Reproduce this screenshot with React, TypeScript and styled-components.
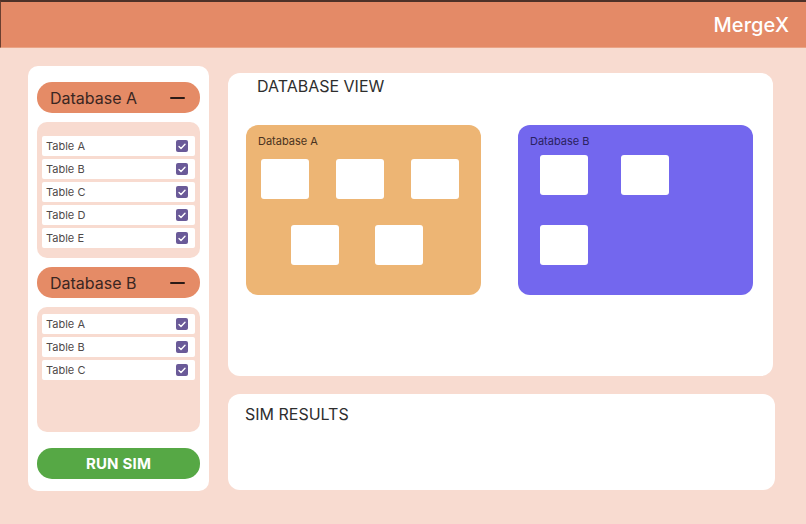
import React from 'react';
import styled, { createGlobalStyle } from 'styled-components';

const GlobalStyle = createGlobalStyle`
  html, body {
    margin: 0;
    padding: 0;
    background: #f8dbd0;
    font-family: Inter, "Noto Sans", sans-serif;
  }
`;

const Page = styled.div`
  width: 806px;
  height: 524px;
  display: flex;
  flex-direction: column;
  background: #f8dbd0;
  overflow: hidden;
`;

const Header = styled.header`
  height: 45px;
  box-sizing: content-box;
  border-top: 2px solid #4d3128;
  border-left: 1px solid #6b3f30;
  border-bottom: 1px solid #eaa486;
  background: #e48a67;
  display: flex;
  align-items: center;
  justify-content: flex-end;
  padding-right: 17px;
`;

const Brand = styled.h1`
  margin: 0;
  font-size: 20px;
  font-weight: 500;
  color: #ffffff;
  letter-spacing: 0.1px;
`;

const Main = styled.main`
  display: flex;
  gap: 19px;
  padding: 18px 0 0 28px;
`;

const Sidebar = styled.aside`
  width: 181px;
  height: 425px;
  box-sizing: border-box;
  background: #ffffff;
  border-radius: 10px;
  padding: 16px 9px 12px;
  display: flex;
  flex-direction: column;
`;

const DbHeader = styled.div<{ $mt?: number }>`
  height: 31px;
  margin-top: ${(p) => p.$mt ?? 0}px;
  border-radius: 15px;
  background: #e58b66;
  display: flex;
  align-items: center;
  justify-content: space-between;
  padding: 0 15px 0 13px;
  font-size: 16px;
  color: #3a2622;
`;

const Minus = styled.span`
  width: 15px;
  height: 2px;
  background: #2a1a16;
  border-radius: 1px;
`;

const TableList = styled.div<{ $h: number; $pt: number }>`
  height: ${(p) => p.$h}px;
  box-sizing: border-box;
  margin-top: 9px;
  background: #f8dbd0;
  border-radius: 10px;
  padding: ${(p) => p.$pt}px 5px 0;
  display: flex;
  flex-direction: column;
  gap: 3px;
`;

const Row = styled.label`
  height: 20px;
  background: #ffffff;
  border-radius: 2px;
  display: flex;
  align-items: center;
  justify-content: space-between;
  padding: 0 7px 0 4px;
  font-size: 11px;
  color: #4f4a4a;
`;

const Check = styled.span`
  width: 12px;
  height: 12px;
  border-radius: 2px;
  background: #6a5a98;
  display: flex;
  align-items: center;
  justify-content: center;
`;

const RunButton = styled.button`
  margin-top: auto;
  height: 31px;
  border: none;
  border-radius: 15px;
  background: #56a845;
  color: #ffffff;
  font-family: inherit;
  font-size: 15px;
  font-weight: 700;
  letter-spacing: 0.2px;
`;

const Content = styled.section`
  width: 547px;
  padding-top: 7px;
  display: flex;
  flex-direction: column;
  gap: 18px;
`;

const Panel = styled.div<{ $h: number; $w: number; $px: number; $pt: number }>`
  width: ${(p) => p.$w}px;
  height: ${(p) => p.$h}px;
  box-sizing: border-box;
  background: #ffffff;
  border-radius: 12px;
  padding: ${(p) => p.$pt}px ${(p) => p.$px}px 0;
`;

const PanelTitle = styled.h2<{ $ml?: number }>`
  margin: 0 0 0 ${(p) => p.$ml ?? 0}px;
  font-size: 16px;
  font-weight: 400;
  line-height: 20px;
  color: #2e2e2e;
`;

const Boxes = styled.div`
  display: flex;
  gap: 37px;
  margin-top: 29px;
`;

const DbBox = styled.div<{ $bg: string }>`
  width: 235px;
  height: 170px;
  box-sizing: border-box;
  border-radius: 12px;
  background: ${(p) => p.$bg};
  padding: 10px 12px 0;
`;

const BoxLabel = styled.div<{ $color: string }>`
  font-size: 11px;
  line-height: 13px;
  color: ${(p) => p.$color};
`;

const BlockRow = styled.div<{ $gap: number; $pl: number; $mt: number }>`
  display: flex;
  gap: ${(p) => p.$gap}px;
  padding-left: ${(p) => p.$pl}px;
  margin-top: ${(p) => p.$mt}px;
`;

const Block = styled.div`
  width: 48px;
  height: 40px;
  background: #ffffff;
  border-radius: 3px;
`;

const CheckIcon = () => (
  <svg width="8" height="7" viewBox="0 0 8 7">
    <path d="M1 3.6 L3 5.4 L7 1.2" fill="none" stroke="#ffffff" strokeWidth="1.4" strokeLinecap="round" strokeLinejoin="round" />
  </svg>
);

const TableRow = ({ name }: { name: string }) => (
  <Row>
    {name}
    <Check>
      <CheckIcon />
    </Check>
  </Row>
);

export default function App() {
  return (
    <>
      <GlobalStyle />
      <Page>
        <Header>
          <Brand>MergeX</Brand>
        </Header>
        <Main>
          <Sidebar>
            <DbHeader>
              Database A
              <Minus />
            </DbHeader>
            <TableList $h={136} $pt={14}>
              {['Table A', 'Table B', 'Table C', 'Table D', 'Table E'].map((t) => (
                <TableRow key={t} name={t} />
              ))}
            </TableList>
            <DbHeader $mt={9}>
              Database B
              <Minus />
            </DbHeader>
            <TableList $h={125} $pt={7}>
              {['Table A', 'Table B', 'Table C'].map((t) => (
                <TableRow key={t} name={t} />
              ))}
            </TableList>
            <RunButton>RUN SIM</RunButton>
          </Sidebar>
          <Content>
            <Panel $w={545} $h={303} $px={18} $pt={3}>
              <PanelTitle $ml={11}>DATABASE VIEW</PanelTitle>
              <Boxes>
                <DbBox $bg="#edb574">
                  <BoxLabel $color="#4a3320">Database A</BoxLabel>
                  <BlockRow $gap={27} $pl={3} $mt={11}>
                    <Block />
                    <Block />
                    <Block />
                  </BlockRow>
                  <BlockRow $gap={36} $pl={33} $mt={26}>
                    <Block />
                    <Block />
                  </BlockRow>
                </DbBox>
                <DbBox $bg="#7367ee">
                  <BoxLabel $color="#2a2260">Database B</BoxLabel>
                  <BlockRow $gap={33} $pl={10} $mt={7}>
                    <Block />
                    <Block />
                  </BlockRow>
                  <BlockRow $gap={33} $pl={10} $mt={30}>
                    <Block />
                  </BlockRow>
                </DbBox>
              </Boxes>
            </Panel>
            <Panel $w={547} $h={96} $px={17} $pt={10}>
              <PanelTitle>SIM RESULTS</PanelTitle>
            </Panel>
          </Content>
        </Main>
      </Page>
    </>
  );
}
